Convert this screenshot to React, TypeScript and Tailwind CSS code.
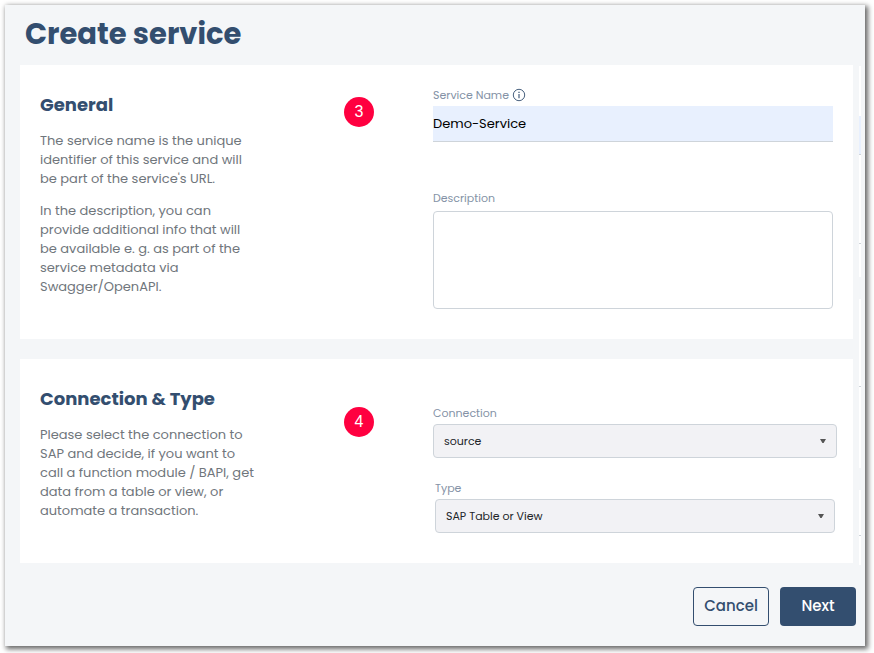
import type { ReactNode } from "react";
import { useState } from "react";

const LABEL = "text-[11px] leading-4 text-[#8492a6]";

function Badge({ children }: { children: ReactNode }) {
  return (
    <span className="flex size-[30px] items-center justify-center rounded-full bg-[#ff0040] font-['Liberation_Sans',Arial,sans-serif] text-base text-white">
      {children}
    </span>
  );
}

function InfoIcon() {
  return (
    <svg viewBox="0 0 14 14" className="size-[14px]" fill="none" stroke="#334e6f" aria-hidden="true">
      <circle cx="7" cy="7" r="5.7" strokeWidth="0.9" />
      <path d="M7 6v4.2" strokeWidth="1.1" />
      <path d="M7 3.7v1.2" strokeWidth="1.2" />
    </svg>
  );
}

function SelectField({ id, label, options }: { id: string; label: string; options: string[] }) {
  const [value, setValue] = useState(options[0]);
  return (
    <div>
      <label htmlFor={id} className={`block ${LABEL}`}>
        {label}
      </label>
      <div className="relative mt-[3px]">
        <select
          id={id}
          value={value}
          onChange={(e) => setValue(e.target.value)}
          className="block h-[34px] w-full appearance-none rounded-[4px] border border-[#ced4da] bg-[#f2f2f5] px-[10px] text-[11px] text-[#212529]"
        >
          {options.map((o) => (
            <option key={o}>{o}</option>
          ))}
        </select>
        <svg viewBox="0 0 6 4" className="pointer-events-none absolute top-[15px] right-[11px] h-1 w-1.5" fill="#555" aria-hidden="true">
          <path d="M0 0h6L3.6 4H2.4z" />
        </svg>
      </div>
    </div>
  );
}

export default function App() {
  const [name, setName] = useState("Demo-Service");
  return (
    <div className="bg-white pt-[5px] pr-[9px] pb-[7px] pl-[5px] font-['Poppins','Inter',sans-serif]">
      <main className="bg-[#f4f6f8] pt-[11px] pb-5 shadow-[2px_2px_5px_1px_rgba(0,0,0,0.6)]">
        <h1 className="pl-5 text-[29px] leading-9 font-bold text-[#334e6f]">Create service</h1>

        <div className="mt-[13px] flex gap-1.5 pr-1 pl-[15px]">
          <div className="flex min-w-0 flex-1 flex-col gap-5">
            <section className="flex bg-white px-5 pb-[30px]">
              <div className="w-56 shrink-0 pt-7">
                <h2 className="text-lg leading-6 font-bold text-[#334e6f]">General</h2>
                <p className="mt-3.5 text-[13px] leading-[19px] text-[#70767c]">
                  The service name is the unique
                  <br />
                  identifier of this service and will
                  <br />
                  be part of the service's URL.
                </p>
                <p className="mt-[13px] text-[13px] leading-[19px] text-[#70767c]">
                  In the description, you can
                  <br />
                  provide additional info that will
                  <br />
                  be available e. g. as part of the
                  <br />
                  service metadata via
                  <br />
                  Swagger/OpenAPI.
                </p>
              </div>
              <div className="pt-8 pl-20">
                <Badge>3</Badge>
              </div>
              <div className="ml-auto w-[400px] pt-[22px]">
                <div className="flex items-center gap-[3px]">
                  <label htmlFor="service-name" className={LABEL}>
                    Service Name
                  </label>
                  <InfoIcon />
                </div>
                <input
                  id="service-name"
                  value={name}
                  onChange={(e) => setName(e.target.value)}
                  className="mt-[3px] block h-9 w-full border-b border-[#ced4da] bg-[#e8f0fe] text-[13px] text-black outline-none"
                />
                <label htmlFor="description" className={`mt-12 block ${LABEL}`}>
                  Description
                </label>
                <textarea
                  id="description"
                  className="mt-[5px] block h-[98px] w-full resize-none rounded-[4px] border border-[#ced4da] bg-white p-2 text-[13px] outline-none"
                />
              </div>
            </section>

            <section className="flex bg-white px-5 pb-[30px]">
              <div className="w-56 shrink-0 pt-7">
                <h2 className="text-lg leading-6 font-bold text-[#334e6f]">Connection &amp; Type</h2>
                <p className="mt-3.5 text-[13px] leading-[19px] text-[#70767c]">
                  Please select the connection to
                  <br />
                  SAP and decide, if you want to
                  <br />
                  call a function module / BAPI, get
                  <br />
                  data from a table or view, or
                  <br />
                  automate a transaction.
                </p>
              </div>
              <div className="pt-12 pl-20">
                <Badge>4</Badge>
              </div>
              <div className="ml-auto w-[400px] pt-[46px]">
                <div className="-mr-1">
                  <SelectField id="connection" label="Connection" options={["source"]} />
                </div>
                <div className="mt-[22px] -mr-0.5 pl-0.5">
                  <SelectField id="type" label="Type" options={["SAP Table or View", "Function Module / BAPI", "Transaction"]} />
                </div>
              </div>
            </section>
          </div>

          <div className="flex w-0.5 flex-col pt-px" aria-hidden="true">
            <div className="h-[211px] bg-white pt-[50px]">
              <div className="h-[39px] border-b border-[#ced4da] bg-[#e8f0fe]" />
              <div className="mt-[88px] h-px bg-[#ced4da]" />
            </div>
            <div className="mt-[22px] h-[169px] bg-white pt-[87px]">
              <div className="h-px bg-[#ced4da]" />
            </div>
            <div className="mt-[22px] h-[75px] bg-white pt-[45px]">
              <div className="h-px bg-[#ced4da]" />
            </div>
          </div>
        </div>

        <div className="mt-[22px] flex justify-end gap-[11px] pr-[9px]">
          <button type="button" className="h-[39px] w-[76px] rounded-[4px] border border-[#334e6f] text-[15px] font-medium text-[#334e6f]">
            Cancel
          </button>
          <button type="button" className="h-[39px] w-[76px] rounded-[4px] bg-[#334e6f] text-[15px] font-medium text-white">
            Next
          </button>
        </div>
      </main>
    </div>
  );
}
